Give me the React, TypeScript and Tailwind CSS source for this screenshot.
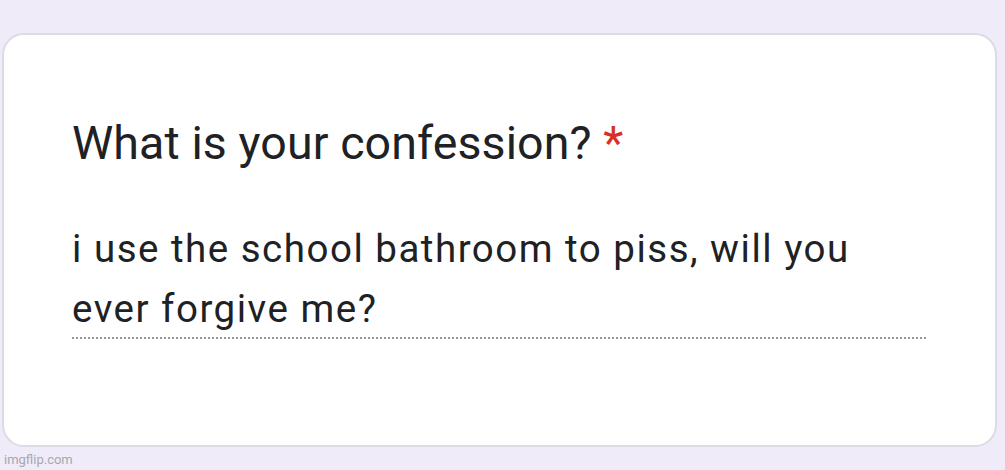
export default function App() {
  return (
    <div className="relative h-[470px] w-[1005px] overflow-hidden bg-[#efebf8] font-['Roboto',sans-serif]">
      <div className="pt-[33px] pl-[2px] pr-[8px]">
        <div className="h-[414px] rounded-[22px] border-2 border-[#dcdbe3] bg-white pl-[68px] pr-[70px] pt-[82px]">
          <h1 className="text-[46.5px] leading-[52px] tracking-[0.1px] text-[#202124]">
            What is your confession? <span className="text-[#d93025]">*</span>
          </h1>
          <div className="mt-[49.5px] w-[854px]">
            <p className="w-[820px] text-[38.5px] leading-[60px] tracking-[1.5px] text-[#202124]">
              i use the school bathroom to piss, will you ever forgive me?
            </p>
            <div className="-mt-[1.5px] border-b-2 border-dotted border-[#969696]" />
          </div>
        </div>
      </div>
      <p className="pl-[4px] pt-[3px] text-[13px] text-[#a9a7b0]">imgflip.com</p>
    </div>
  )
}
